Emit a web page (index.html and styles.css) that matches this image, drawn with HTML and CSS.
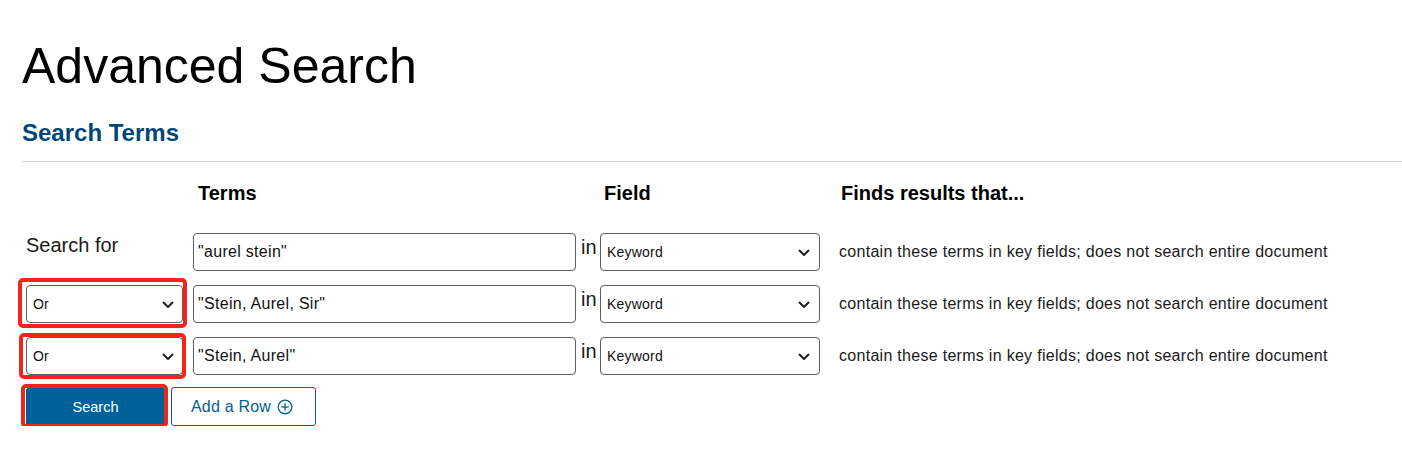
FILE: index.html
```html
<!DOCTYPE html>
<html lang="en">
<head>
<meta charset="utf-8">
<title>Advanced Search</title>
<link rel="stylesheet" href="styles.css">
</head>
<body>
<main class="page">
  <h1 class="title">Advanced Search</h1>
  <h2 class="section-title">Search Terms</h2>
  <hr class="rule">
  <div class="grid">
    <div class="head"></div>
    <div class="head head-terms">Terms</div>
    <div class="head"></div>
    <div class="head head-field">Field</div>
    <div class="head head-finds">Finds results that...</div>

    <div class="cell label">Search for</div>
    <div class="cell"><div class="input">"aurel stein"</div></div>
    <div class="cell in">in</div>
    <div class="cell"><div class="select field-select"><span>Keyword</span><svg class="chev" width="12" height="7" viewBox="0 0 12 7"><polyline points="1,1 6,6 11,1" fill="none" stroke="#1f1f1f" stroke-width="2"/></svg></div></div>
    <div class="cell desc">contain these terms in key fields; does not search entire document</div>

    <div class="cell"><div class="select op-select mark mark-r2"><span>Or</span><svg class="chev" width="12" height="7" viewBox="0 0 12 7"><polyline points="1,1 6,6 11,1" fill="none" stroke="#1f1f1f" stroke-width="2"/></svg></div></div>
    <div class="cell"><div class="input">"Stein, Aurel, Sir"</div></div>
    <div class="cell in">in</div>
    <div class="cell"><div class="select field-select"><span>Keyword</span><svg class="chev" width="12" height="7" viewBox="0 0 12 7"><polyline points="1,1 6,6 11,1" fill="none" stroke="#1f1f1f" stroke-width="2"/></svg></div></div>
    <div class="cell desc">contain these terms in key fields; does not search entire document</div>

    <div class="cell"><div class="select op-select mark mark-r3"><span>Or</span><svg class="chev" width="12" height="7" viewBox="0 0 12 7"><polyline points="1,1 6,6 11,1" fill="none" stroke="#1f1f1f" stroke-width="2"/></svg></div></div>
    <div class="cell"><div class="input">"Stein, Aurel"</div></div>
    <div class="cell in">in</div>
    <div class="cell"><div class="select field-select"><span>Keyword</span><svg class="chev" width="12" height="7" viewBox="0 0 12 7"><polyline points="1,1 6,6 11,1" fill="none" stroke="#1f1f1f" stroke-width="2"/></svg></div></div>
    <div class="cell desc">contain these terms in key fields; does not search entire document</div>
  </div>
  <div class="actions">
    <button class="btn btn-primary mark mark-btn">Search</button>
    <button class="btn btn-outline">Add a Row<svg class="plus" width="16" height="16" viewBox="0 0 16 16"><circle cx="8" cy="8" r="6.8" fill="none" stroke="#00629b" stroke-width="1.3"/><line x1="8" y1="4.3" x2="8" y2="11.7" stroke="#00629b" stroke-width="1.3"/><line x1="4.3" y1="8" x2="11.7" y2="8" stroke="#00629b" stroke-width="1.3"/></svg></button>
  </div>
</main>
</body>
</html>
```

FILE: styles.css
```css
* { box-sizing: border-box; }
html, body { margin: 0; padding: 0; background: #fff; }
body {
  font-family: "Liberation Sans", Arial, sans-serif;
  color: #1a1a1a;
}
.page {
  padding: 37px 0 0 22px;
}
.title {
  margin: 0;
  font-size: 50px;
  line-height: 58px;
  font-weight: 400;
  color: #000;
}
.section-title {
  margin: 24px 0 0 0;
  font-size: 24px;
  line-height: 28px;
  font-weight: 700;
  color: #004778;
}
.rule {
  margin: 14px 0 0 0;
  border: 0;
  border-top: 1px solid #d4d4d4;
  height: 0;
}
.grid {
  margin: 19px 0 0 4px;
  display: grid;
  grid-template-columns: 167px 383px 24px 239px 1fr;
  grid-template-rows: 38px 38px 38px 38px;
  row-gap: 14px;
}
.head {
  font-size: 20px;
  line-height: 24px;
  font-weight: 700;
  color: #000;
}
.head-terms { padding-left: 5px; }
.head-field { padding-left: 4px; }
.head-finds { padding-left: 2px; }
.cell { display: flex; min-width: 0; }
.label {
  font-size: 20px;
  line-height: 24px;
  color: #1a1a1a;
}
.in {
  font-size: 20px;
  line-height: 24px;
  padding: 2px 0 0 5px;
  color: #1a1a1a;
}
.desc {
  align-items: center;
  font-size: 16px;
  letter-spacing: 0.29px;
  color: #1a1a1a;
}
.input {
  width: 383px;
  height: 38px;
  border: 1px solid #5c6066;
  border-radius: 4px;
  display: flex;
  align-items: center;
  padding-left: 4px;
  font-size: 16px;
  letter-spacing: 0.3px;
  color: #111;
  background: #fff;
}
.select {
  height: 38px;
  border: 1px solid #5c6066;
  border-radius: 4px;
  display: flex;
  align-items: center;
  justify-content: space-between;
  font-size: 14px;
  letter-spacing: 0.2px;
  color: #111;
  background: #fff;
  position: relative;
}
.field-select { width: 220px; padding: 0 9px 0 6px; }
.op-select { width: 157px; padding: 0 8px 0 6px; }
.chev { display: block; margin-top: 1px; }

.actions {
  display: flex;
  gap: 6px;
  margin: 12px 0 0 4px;
  align-items: flex-start;
}
.btn {
  font-family: "Liberation Sans", Arial, sans-serif;
  cursor: pointer;
  margin: 0;
}
.btn-primary {
  width: 139px;
  height: 37px;
  margin-top: 1px;
  background: #00629b;
  color: #fff;
  border: 1px solid #00578a;
  border-radius: 2px;
  font-size: 14.5px;
  position: relative;
}
.btn-outline {
  height: 39px;
  width: 145px;
  background: #fff;
  color: #00629b;
  border: 1px solid #00629b;
  border-radius: 3px;
  font-size: 16px;
  letter-spacing: 0.2px;
  display: flex;
  align-items: center;
  padding: 0 0 0 19px;
  gap: 6px;
}
.plus { display: block; }

.mark { position: relative; }
.mark::after {
  content: "";
  position: absolute;
  border: 4px solid #f3241b;
  border-radius: 5px;
  pointer-events: none;
}
.mark-r2::after { top: -8px; bottom: -6px; left: -9px; right: -5px; }
.mark-r3::after { top: -5px; bottom: -5px; left: -8px; right: -4px; }
.mark-btn::after { top: -5px; bottom: -4px; left: -6px; right: -4px; }
```
